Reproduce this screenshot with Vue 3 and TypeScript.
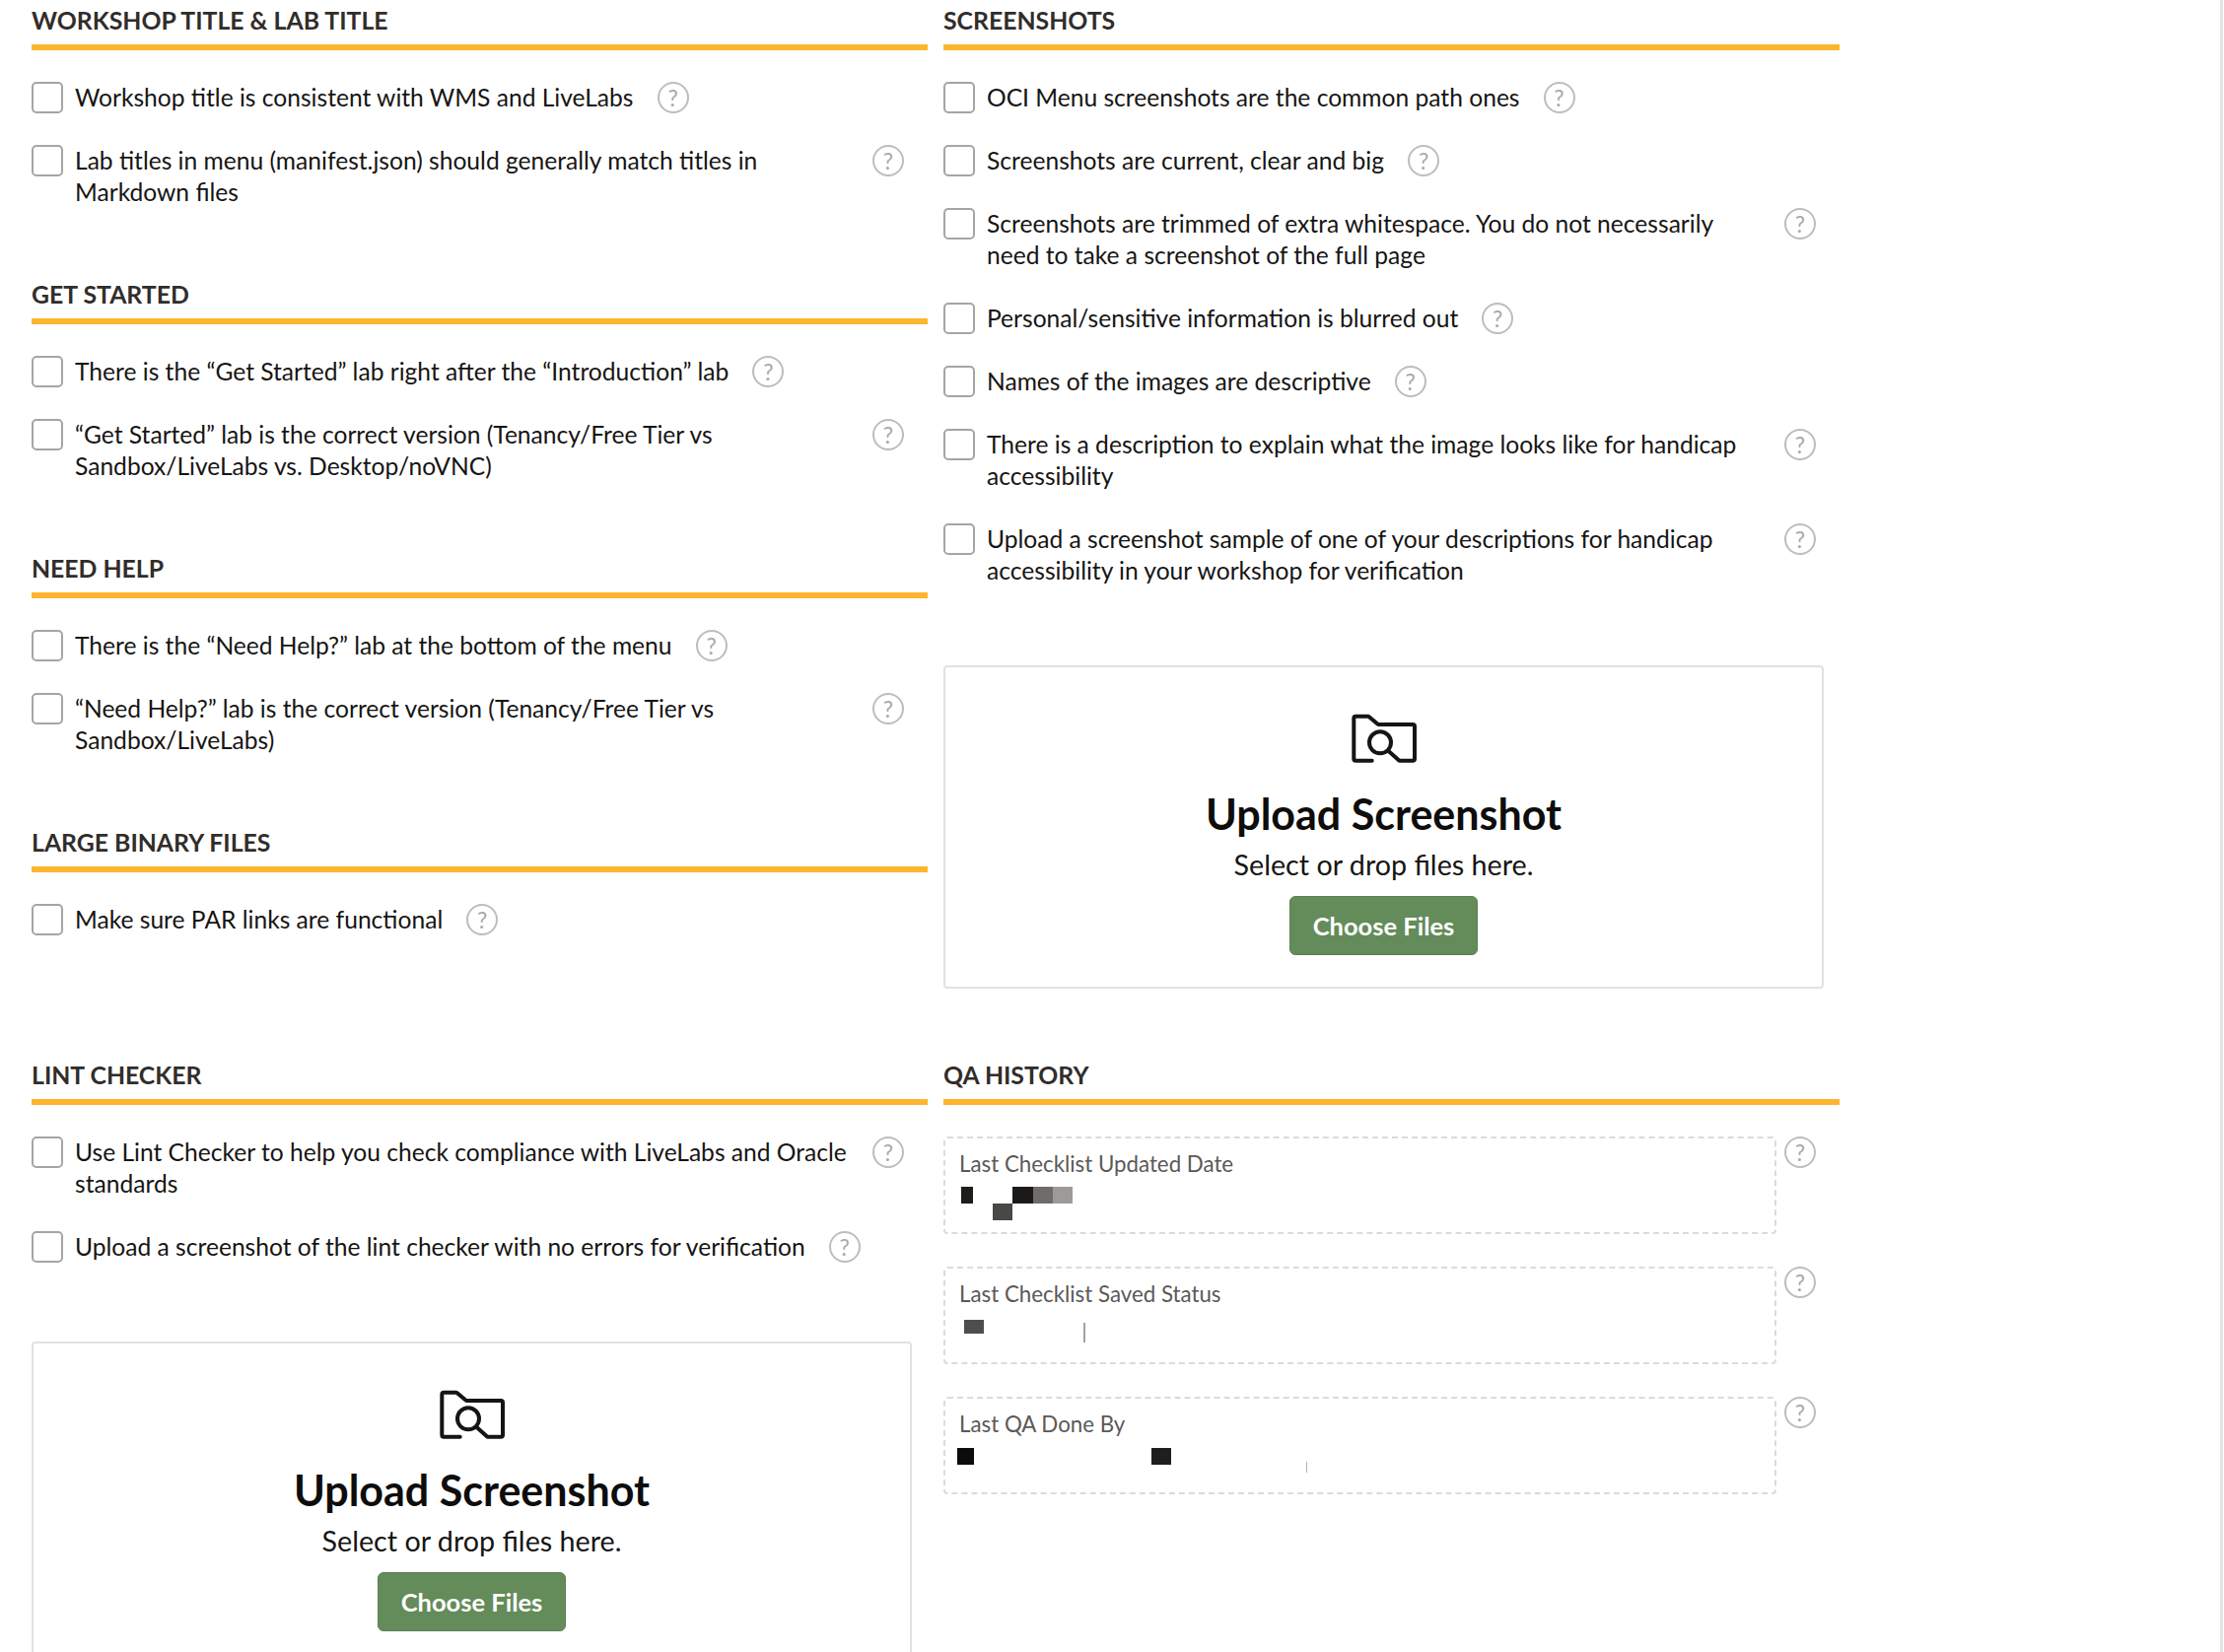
<script setup lang="ts">
interface Section {
  title: string
  items: string[]
}

interface Block {
  x: number
  y: number
  w: number
  h: number
  c: string
}

const leftSections: Section[] = [
  {
    title: 'WORKSHOP TITLE & LAB TITLE',
    items: [
      'Workshop title is consistent with WMS and LiveLabs',
      'Lab titles in menu (manifest.json) should generally match titles in Markdown files',
    ],
  },
  {
    title: 'GET STARTED',
    items: [
      'There is the “Get Started” lab right after the “Introduction” lab',
      '“Get Started” lab is the correct version (Tenancy/Free Tier vs Sandbox/LiveLabs vs. Desktop/noVNC)',
    ],
  },
  {
    title: 'NEED HELP',
    items: [
      'There is the “Need Help?” lab at the bottom of the menu',
      '“Need Help?” lab is the correct version (Tenancy/Free Tier vs Sandbox/LiveLabs)',
    ],
  },
  {
    title: 'LARGE BINARY FILES',
    items: ['Make sure PAR links are functional'],
  },
]

const screenshotItems = [
  'OCI Menu screenshots are the common path ones',
  'Screenshots are current, clear and big',
  'Screenshots are trimmed of extra whitespace. You do not necessarily need to take a screenshot of the full page',
  'Personal/sensitive information is blurred out',
  'Names of the images are descriptive',
  'There is a description to explain what the image looks like for handicap accessibility',
  'Upload a screenshot sample of one of your descriptions for handicap accessibility in your workshop for verification',
]

const lintItems = [
  'Use Lint Checker to help you check compliance with LiveLabs and Oracle standards',
  'Upload a screenshot of the lint checker with no errors for verification',
]

// the values in the reference are pixelated, so they are drawn as mosaics
const history: { label: string; blocks: Block[] }[] = [
  {
    label: 'Last Checklist Updated Date',
    blocks: [
      { x: 18, y: 51, w: 12, h: 17, c: '#1f1d1b' },
      { x: 50, y: 68, w: 20, h: 17, c: '#4a4847' },
      { x: 70, y: 51, w: 21, h: 17, c: '#1c1a18' },
      { x: 91, y: 51, w: 20, h: 17, c: '#6e6d6c' },
      { x: 111, y: 51, w: 20, h: 17, c: '#9c9b9a' },
    ],
  },
  {
    label: 'Last Checklist Saved Status',
    blocks: [
      { x: 21, y: 54, w: 20, h: 14, c: '#504e4d' },
      { x: 142, y: 57, w: 2, h: 20, c: '#a3a2a1' },
    ],
  },
  {
    label: 'Last QA Done By',
    blocks: [
      { x: 14, y: 52, w: 17, h: 17, c: '#0e0c0b' },
      { x: 211, y: 52, w: 20, h: 17, c: '#201e1c' },
      { x: 368, y: 66, w: 1, h: 11, c: '#b5b3b1' },
    ],
  },
]
</script>

<template>
  <div class="page">
    <main class="content">
      <div class="column">
        <section v-for="section in leftSections" :key="section.title" class="section">
          <h2 class="section-title">{{ section.title }}</h2>
          <div class="rows">
            <div v-for="item in section.items" :key="item" class="row">
              <span class="checkbox"></span>
              <span class="row-text">{{ item }}</span>
              <span class="help">?</span>
            </div>
          </div>
        </section>
      </div>

      <div class="column">
        <section class="section">
          <h2 class="section-title">SCREENSHOTS</h2>
          <div class="rows">
            <div v-for="item in screenshotItems" :key="item" class="row">
              <span class="checkbox"></span>
              <span class="row-text">{{ item }}</span>
              <span class="help">?</span>
            </div>
          </div>
          <div class="upload">
            <svg class="upload-icon" viewBox="0 0 72 56" width="72" height="56" fill="none" stroke="#161513" stroke-width="4" stroke-linecap="round" stroke-linejoin="round">
              <path d="M22.7 49.7H6.3a2 2 0 0 1-2-2V6.7a2 2 0 0 1 2-2h12.2a2 2 0 0 1 1.3.5l8.6 7.3a2 2 0 0 0 1.3.5H64a2 2 0 0 1 2 2v32.7a2 2 0 0 1-2 2H51a2 2 0 0 1-1.4-.6L39 39.5" />
              <circle cx="31" cy="31.3" r="11" />
            </svg>
            <div class="upload-title">Upload Screenshot</div>
            <div class="upload-hint">Select or drop files here.</div>
            <button type="button" class="choose-btn">Choose Files</button>
          </div>
        </section>
      </div>

      <div class="column">
        <section class="section">
          <h2 class="section-title">LINT CHECKER</h2>
          <div class="rows">
            <div v-for="item in lintItems" :key="item" class="row">
              <span class="checkbox"></span>
              <span class="row-text">{{ item }}</span>
              <span class="help">?</span>
            </div>
          </div>
          <div class="upload">
            <svg class="upload-icon" viewBox="0 0 72 56" width="72" height="56" fill="none" stroke="#161513" stroke-width="4" stroke-linecap="round" stroke-linejoin="round">
              <path d="M22.7 49.7H6.3a2 2 0 0 1-2-2V6.7a2 2 0 0 1 2-2h12.2a2 2 0 0 1 1.3.5l8.6 7.3a2 2 0 0 0 1.3.5H64a2 2 0 0 1 2 2v32.7a2 2 0 0 1-2 2H51a2 2 0 0 1-1.4-.6L39 39.5" />
              <circle cx="31" cy="31.3" r="11" />
            </svg>
            <div class="upload-title">Upload Screenshot</div>
            <div class="upload-hint">Select or drop files here.</div>
            <button type="button" class="choose-btn">Choose Files</button>
          </div>
        </section>
      </div>

      <div class="column">
        <section class="section">
          <h2 class="section-title">QA HISTORY</h2>
          <div class="history">
            <div v-for="entry in history" :key="entry.label" class="history-row">
              <div class="history-box">
                <div class="history-label">{{ entry.label }}</div>
                <i
                  v-for="b in entry.blocks"
                  :key="b.x"
                  class="mosaic"
                  :style="{ left: b.x + 'px', top: b.y + 'px', width: b.w + 'px', height: b.h + 'px', background: b.c }"
                ></i>
              </div>
              <span class="help">?</span>
            </div>
          </div>
        </section>
      </div>
    </main>
    <div class="scroll-track"></div>
  </div>
</template>

<style scoped>
.page {
  width: 2256px;
  height: 1676px;
  overflow: hidden;
  display: flex;
  background: #fff;
  color: #161513;
  font-family: Lato, 'Open Sans', sans-serif;
}

.content {
  flex: 1;
  padding-left: 32px;
  display: grid;
  grid-template-columns: 909px 909px;
  grid-auto-rows: min-content;
  column-gap: 16px;
  row-gap: 67px;
  align-content: start;
}

.column {
  display: flex;
  flex-direction: column;
  gap: 67px;
}

.section-title {
  margin: 0;
  height: 45px;
  padding-top: 5px;
  box-sizing: border-box;
  font-size: 24.8px;
  line-height: 32px;
  font-weight: 700;
  color: #312d2a;
}

.section-title::after {
  content: '';
  display: block;
  height: 6px;
  margin-top: 8px;
  background: #fdb52d;
}

.rows {
  padding-top: 38px;
  display: flex;
  flex-direction: column;
  gap: 32px;
}

.row {
  width: 885px;
  display: flex;
  align-items: flex-start;
}

.checkbox {
  flex: none;
  width: 32px;
  height: 32px;
  box-sizing: border-box;
  border: 2px solid #a5a5a5;
  border-radius: 5px;
  margin-right: 12px;
}

.row-text {
  flex: 0 1 auto;
  font-size: 24.6px;
  line-height: 32px;
  margin-right: 24px;
}

.help {
  flex: none;
  width: 32px;
  height: 32px;
  box-sizing: border-box;
  border: 2px solid #bdbdbd;
  border-radius: 50%;
  display: flex;
  align-items: center;
  justify-content: center;
  font-size: 23px;
  font-weight: 400;
  color: #a8a8a8;
}

.upload {
  width: 893px;
  height: 328px;
  box-sizing: border-box;
  margin-top: 80px;
  border: 2px solid #e2e1df;
  border-radius: 4px;
  display: flex;
  flex-direction: column;
  align-items: center;
  padding-top: 45px;
}

.upload-icon {
  flex: none;
  transform: translateX(1px);
}

.upload-title {
  margin-top: 24px;
  font-size: 43px;
  line-height: 48px;
  font-weight: 700;
  color: #0e0d0c;
}

.upload-hint {
  margin-top: 9px;
  font-size: 28.7px;
  line-height: 36px;
}

.choose-btn {
  margin-top: 14px;
  width: 191px;
  height: 60px;
  box-sizing: border-box;
  background: #648b5a;
  border: 1px solid #5a7f50;
  border-radius: 6px;
  color: #fff;
  font-family: inherit;
  font-size: 25.5px;
  font-weight: 700;
}

.history {
  padding-top: 38px;
  display: flex;
  flex-direction: column;
  gap: 33px;
}

.history-row {
  display: flex;
  align-items: flex-start;
  gap: 8px;
}

.history-box {
  position: relative;
  width: 845px;
  height: 99px;
  box-sizing: border-box;
  border: 2px dashed #dcdbd9;
  border-radius: 4px;
  padding: 12px 14px;
}

.history-label {
  font-size: 22.3px;
  line-height: 28px;
  color: #5b5957;
}

.mosaic {
  position: absolute;
  display: block;
  margin: -2px;
}

.scroll-track {
  flex: none;
  width: 3px;
  margin-right: 1px;
  background: #e4e4e4;
}
</style>

<style>
html,
body {
  margin: 0;
  background: #fff;
}
</style>
